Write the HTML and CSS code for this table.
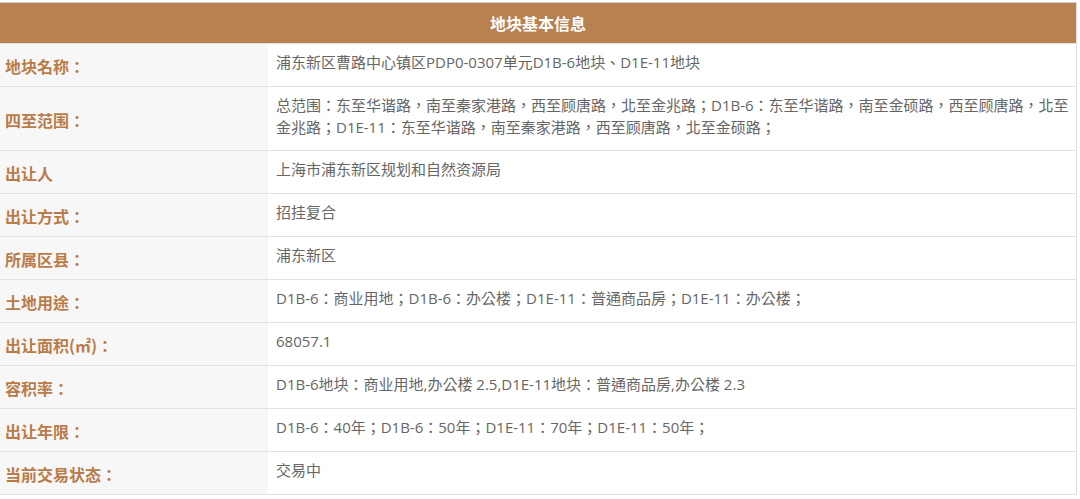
FILE: index.html
```html
<!DOCTYPE html>
<html lang="zh-CN">
<head>
<meta charset="utf-8">
<title>地块基本信息</title>
<link rel="stylesheet" href="styles.css">
</head>
<body>
<div class="wrap">
<table class="info">
  <colgroup>
    <col class="col-label">
    <col class="col-value">
  </colgroup>
  <thead>
    <tr><th colspan="2" class="title">地块基本信息</th></tr>
  </thead>
  <tbody>
    <tr><td class="label">地块名称：</td><td class="value">浦东新区曹路中心镇区PDP0-0307单元D1B-6地块、D1E-11地块</td></tr>
    <tr><td class="label">四至范围：</td><td class="value">总范围：东至华谐路，南至秦家港路，西至顾唐路，北至金兆路；D1B-6：东至华谐路，南至金硕路，西至顾唐路，北至金兆路；D1E-11：东至华谐路，南至秦家港路，西至顾唐路，北至金硕路；</td></tr>
    <tr><td class="label">出让人</td><td class="value">上海市浦东新区规划和自然资源局</td></tr>
    <tr><td class="label">出让方式：</td><td class="value">招挂复合</td></tr>
    <tr><td class="label">所属区县：</td><td class="value">浦东新区</td></tr>
    <tr><td class="label">土地用途：</td><td class="value">D1B-6：商业用地；D1B-6：办公楼；D1E-11：普通商品房；D1E-11：办公楼；</td></tr>
    <tr><td class="label">出让面积(㎡)：</td><td class="value">68057.1</td></tr>
    <tr><td class="label">容积率：</td><td class="value">D1B-6地块：商业用地,办公楼 2.5,D1E-11地块：普通商品房,办公楼 2.3</td></tr>
    <tr><td class="label">出让年限：</td><td class="value">D1B-6：40年；D1B-6：50年；D1E-11：70年；D1E-11：50年；</td></tr>
    <tr><td class="label">当前交易状态：</td><td class="value">交易中</td></tr>
  </tbody>
</table>
</div>
</body>
</html>
```
FILE: styles.css
```css
html, body {
  margin: 0;
  padding: 0;
  background: #ffffff;
}
body {
  font-family: "Noto Sans CJK TC", "Noto Sans CJK SC", sans-serif;
  font-feature-settings: "locl" 0;
}
.wrap {
  padding-top: 2px;
}
.info {
  width: 1077px;
  border-collapse: collapse;
  table-layout: fixed;
  border-top: 1px solid #cccccc;
  border-right: 1px solid #dddddd;
}
.col-label {
  width: 268px;
}
.title {
  height: 40px;
  padding: 0;
  background: #b98050;
  color: #ffffff;
  font-size: 16px;
  font-weight: bold;
  text-align: center;
  vertical-align: middle;
  line-height: 20px;
}
.info tbody tr {
  height: 43px;
  border-top: 1px solid #e2e2e2;
}
.info tbody tr:last-child {
  border-bottom: 1px solid #e2e2e2;
}
.label {
  padding: 2px 5px 0;
  background: #f7f7f7;
  color: #b97b48;
  font-size: 16px;
  font-weight: bold;
  vertical-align: middle;
  line-height: 22px;
}
.value {
  padding: 7px 0 12px 8px;
  color: #666666;
  font-family: "Open Sans", "Noto Sans CJK TC", "Noto Sans CJK SC", sans-serif;
  font-size: 15px;
  line-height: 22px;
  vertical-align: top;
}
```
